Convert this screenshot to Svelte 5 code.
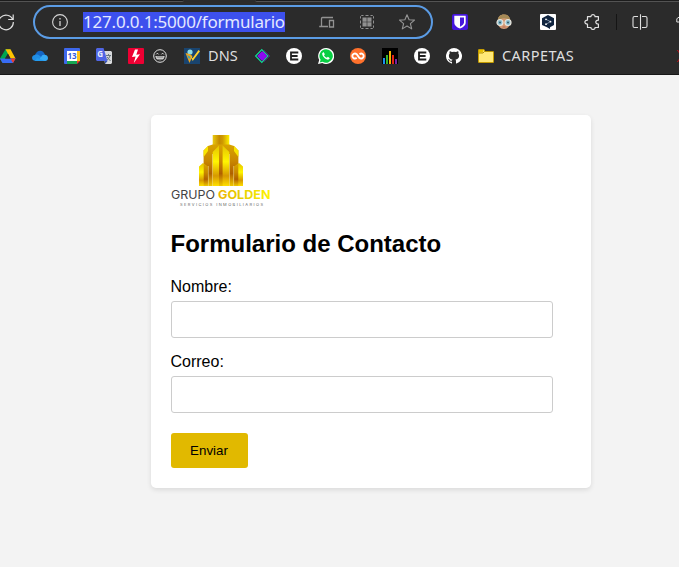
<script>
  const bars = [
    [1, 10, 5, '#1c90ee'], [4, 7, 8, '#35b52d'], [7, 3, 12, '#f4b400'], [10, 7, 8, '#e32416'], [13, 11, 4, '#7524a5']
  ];
  let nombre = $state('');
  let correo = $state('');
</script>

{#snippet eBadge()}
  <svg class="icon" viewBox="0 0 16 16"><circle cx="8" cy="8" r="8" fill="#fff"/><path d="M12.3 4.5H5v7h7.3M5 8h6.6" fill="none" stroke="#202020" stroke-width="1.8"/></svg>
{/snippet}

<div class="browser">
  <div class="edge"><span class="edge-left"></span><span class="edge-right"></span></div>
  <div class="toolbar">
    <svg class="reload" viewBox="0 0 18 18"><path d="M15.7 6.5A7.3 7.3 0 1 0 16.3 9M16.2 1.5v5h-5" fill="none" stroke="#dedede" stroke-width="1.2"/></svg>
    <div class="address">
      <svg class="info" viewBox="0 0 16 16"><circle cx="8" cy="8" r="7.4" fill="none" stroke="#d6d6d6" stroke-width="1.1"/><path d="M8 7v5M8 4v1.4" stroke="#c8c8c8" stroke-width="1.4"/></svg>
      <span class="url">127.0.0.1:5000/formulario</span>
      <div class="address-icons">
        <svg class="icon" viewBox="0 0 16 16"><path d="M9 12.5H.2M2.5 12V4.5q0-1 1-1H14M10.5 6.5h4v6.5h-4z" fill="none" stroke="#929292" stroke-width="1.3"/></svg>
        <svg class="icon" viewBox="0 0 16 16"><path d="M1.5 4.5v-2l1-1h2M6.5 1.5h3M11.5 1.5h2l1 1v2M14.5 6.5v3M14.5 11.5v2l-1 1h-2M9.5 14.5h-3M4.5 14.5h-2l-1-1v-2M1.5 9.5v-3" fill="none" stroke="#909090"/><path d="M3.5 3.5h4.2v4.2H3.5zM8.3 3.5h4.2v4.2H8.3zM3.5 8.3h4.2v4.2H3.5zM8.3 8.3h4.2v4.2H8.3z" fill="#909090"/></svg>
        <svg class="icon" viewBox="0 0 16 16"><path d="m8 .8 2.1 4.9 5.4.4-4.1 3.5 1.3 5.3L8 12l-4.7 2.9 1.3-5.3L.5 6.1l5.4-.4z" fill="none" stroke="#959595" stroke-width="1.1" stroke-linejoin="round"/></svg>
      </div>
    </div>
    <div class="extensions">
      <svg class="icon" viewBox="0 0 16 16"><rect width="16" height="16" rx="2" fill="#4516dc"/><path d="M2.3 1.8h11.4v6.4c0 3.2-2.3 4.9-5.7 6.3-3.4-1.4-5.7-3.1-5.7-6.3z" fill="#fff"/><path d="M8 3.5h4v4.8c0 2-1.7 3.2-4 4.5z" fill="#4516dc"/></svg>
      <svg class="icon" viewBox="0 0 16 16"><path d="M2 8C1.5 3 4 .6 8 .6s6.5 2.5 6 7.5c-.1 4-2 7-6 7s-6-3-6-7" fill="#d39a73"/><path d="M1.5 7C2 3 4 .6 8 .6S14 3 14.5 7C12 5 11 4.2 8 4.2S4 5 1.5 7" fill="#a58a56"/><circle cx="4" cy="8.5" r="3" fill="#8fc0cf" stroke="#e9e5dd" stroke-width="1.2"/><circle cx="12" cy="8.5" r="3" fill="#8fc0cf" stroke="#e9e5dd" stroke-width="1.2"/><circle cx="4" cy="8.5" r="1" fill="#345b68"/><circle cx="12" cy="8.5" r="1" fill="#345b68"/><path d="M6.5 13h3" stroke="#b76a58"/></svg>
      <svg class="icon" viewBox="0 0 16 16"><rect width="16" height="16" rx="1" fill="#fff"/><path d="m8 1 6 3.2v6.9l-4 2.1V15l-3-1.7-5-2.4V4.2z" fill="#10243f"/><path d="m6.2 5.4 4.2 2.2-4.2 2.6" fill="none" stroke="#8da0b5" stroke-width=".8"/><g fill="#fff"><circle cx="6" cy="5.3" r=".9"/><circle cx="10.5" cy="7.7" r=".9"/><circle cx="6" cy="10.2" r=".9"/></g></svg>
      <svg class="icon" viewBox="0 0 16 16"><path d="M3.5 2.6H7c-.2-2.6 4.2-2.6 4 0h3.4v3.6c-3.5-.2-3.5 4 0 3.8v3.5H11c.2 2.6-4.2 2.6-4 0H3.5v-3.4C0 10.2 0 6 3.5 6.2z" fill="none" stroke="#e1e1e1" stroke-width="1.2" stroke-linejoin="round"/></svg>
    </div>
    <span class="separator"></span>
    <svg class="icon split" viewBox="0 0 16 16"><path d="M6 2.5H2.5Q1 2.5 1 4v8q0 1.5 1.5 1.5H6M10 2.5h3.5Q15 2.5 15 4v8q0 1.5-1.5 1.5H10M8.5 .3v15.4" fill="none" stroke="#dfdfdf" stroke-width="1.1"/></svg>
    <svg class="clipped" viewBox="0 0 3 16"><path d="M3 3.5H2L.8 5v3H3" fill="none" stroke="#ddd"/></svg>
  </div>

  <div class="bookmarks">
    <svg class="icon" viewBox="0 0 16 16"><path d="M5.5 1.3h5L5 10.7 2.5 15 0 10.5z" fill="#00a650"/><path d="M5.5 1.3h5l5 9.2h-5z" fill="#ffc400"/><path d="M0 10.5h15.5L13 15H2.5z" fill="#386bf4"/><path d="M10.5 10.5h5L13 15z" fill="#f13a2b"/><path d="m8 5.8-3 4.8h5.6z" fill="#2b2b2b"/></svg>
    <svg class="icon" viewBox="0 0 16 16"><path d="M3 7C5 1.2 11.5 1.3 13 7l-3 5H3z" fill="#1466c5"/><path d="M3 7c2-1 4 0 5 1l6 4.5c-1 .7-1.6.5-2.4.5H3.5C-1 13-1 7 3 7" fill="#208ee5"/><path d="M6 13 10.5 7q5-1 5.5 3-.2 3-3 3z" fill="#36a9f4"/><path d="m5 10 8 3H3z" fill="#239bf0"/></svg>
    <svg class="icon calendar" viewBox="0 0 16 16"><path d="M0 1q0-1 1-1h14q1 0 1 1v11l-4 4H1q-1 0-1-1z" fill="#3e68ec"/><path d="M13 3h3v10h-3z" fill="#fbc016"/><path d="M3 13h10v3H3z" fill="#16a751"/><path d="M13 13h3l-3 3z" fill="#ee3a31"/><path d="M3 3h10v10H3z" fill="#fff"/><text x="8" y="11">13</text></svg>
    <svg class="icon translate" viewBox="0 0 16 16"><path d="M7 3h8l1 1v11l-1 1H9z" fill="#d9dadc"/><path d="M1 0h6.5l4 13H1l-1-1V1z" fill="#5066e5"/><path d="M9 13h2.5L9 16z" fill="#3452ae"/><text x="1.3" y="9">G</text><path d="M10 7.5h5M12.5 6v1.5M14 7.5c-.4 2-2 4-3 4.5M11 9l3.5 4" fill="none" stroke="#68777f"/></svg>
    <svg class="icon" viewBox="0 0 16 16"><rect width="16" height="16" rx="1" fill="#ee0033"/><path d="M7 1.5 4 9l3.6-.6L5.8 15 12 6.2l-3.7.6L10 1.5z" fill="#fff"/></svg>
    <svg class="emoji" viewBox="0 0 14 14"><g fill="none" stroke="#e4e4e4"><circle cx="7" cy="7" r="6.3"/><path d="m3.2 5.4 1.2-1.2 1.2 1.2M8.4 5.4l1.2-1.2 1.2 1.2"/></g><path d="M2.4 7h9.2c0 5.7-9.2 5.7-9.2 0" fill="#e4e4e4"/><path d="M3.5 8h7M4.4 10.3h5.2" stroke="#444" stroke-width=".8"/></svg>
    <div class="bookmark dns"><svg class="icon" viewBox="0 0 16 16"><rect width="16" height="16" fill="#19446f"/><circle cx="6" cy="4" r="2.6" fill="#8bdce8"/><path d="m1.5 5 4 1 3 2-3 7z" fill="#f1a51b"/><path d="m3 7 4 2-2 2" fill="#3aa3bb"/><path d="m6 7 2.5 3.2L14.5 2 16 3.2 8.7 13z" fill="#ffd02b"/></svg><span class="dns-text">DNS</span></div>
    <svg class="icon diamond" viewBox="0 0 16 16"><path d="m10 2 6 6-6 6-6-6z" fill="#8c0af0"/><path d="M7.8 1.6 14 8l-6.2 6.4L1.6 8z" fill="#8c0af0" stroke="#2b2b2b" stroke-width="2.5"/><path d="M7.8 1.6 14 8l-6.2 6.4L1.6 8z" fill="none" stroke="#11d895" stroke-width="1.2"/><path d="m8.7 3.3 4.7 4.7-4.7 4.7L4 8z" fill="#8c0af0"/></svg>
    {@render eBadge()}
    <svg class="icon" viewBox="0 0 16 16"><path d="M8 0a8 8 0 1 1-3.7 15L0 16l1.2-4A8 8 0 0 1 8 0" fill="#fff"/><path d="M8 1.3a6.7 6.7 0 1 1-3.4 12.4l-2.8.7.8-2.6A6.7 6.7 0 0 1 8 1.3" fill="#08cf43"/><path d="M5.5 4 4.2 5.2c-.4 3 3.8 6.8 6.3 6.4l1.4-1.4-2-1.4-1.1 1C7.5 9.3 6.4 8.2 6 7.2l.9-1z" fill="#fff"/></svg>
    <svg class="icon" viewBox="0 0 16 16"><circle cx="8" cy="8" r="8" fill="#ff712c"/><path d="M9.5 6.2C11.5 4.7 13.7 6 13.7 8s-2.4 3.5-4.4 1.8L6.7 6.2C4.7 4.7 2.3 6 2.3 8s2.4 3.5 4.4 1.8" fill="none" stroke="#fff" stroke-width="1.9"/></svg>
    <svg class="icon" viewBox="0 0 16 16"><path d="M0 0h16v16H0z" fill="#000"/>{#each bars as [x, y, h, color]}<rect {x} {y} width="2" height={h + 1} fill={color}/>{/each}</svg>
    {@render eBadge()}
    <svg class="icon" viewBox="0 0 16 16"><path d="M8 0a8 8 0 0 0-2.5 15.6c.4.1.5-.2.5-.4v-1.5c-2.2.5-2.7-.9-2.7-.9-.4-.9-.9-1.2-.9-1.2-.7-.5.1-.5.1-.5.8.1 1.2.8 1.2.8.7 1.2 1.9.9 2.3.7.1-.5.3-.9.5-1.1-1.8-.2-3.6-.9-3.6-4 0-.9.3-1.6.8-2.1-.1-.2-.4-1 .1-2.1 0 0 .7-.2 2.2.8a7.5 7.5 0 0 1 4 0c1.5-1 2.2-.8 2.2-.8.5 1.1.2 1.9.1 2.1.5.5.8 1.2.8 2.1 0 3.1-1.9 3.8-3.7 4 .3.3.6.8.6 1.5v2.2c0 .2.1.5.5.4A8 8 0 0 0 8 0" fill="#fff"/></svg>
    <div class="bookmark folder"><svg class="icon" viewBox="0 0 16 16"><path d="M.5 2q0-.5.5-.5h5l1 2h8q.5 0 .5.5v10q0 .5-.5.5H1q-.5 0-.5-.5z" fill="#ffe878" stroke="#c49b00"/><path d="M1 2h4.7L4.5 4.5H1z" fill="#e8c000"/><path d="M1 5h4l1.4-1.5H15" fill="none" stroke="#b69100"/></svg><span class="folder-text">CARPETAS</span></div>
    <svg class="red-edge" viewBox="0 0 2 16"><path d="M0 2h1l1 2v1zM2 11v1l-1 2H0z" fill="#d80b12"/></svg>
  </div>
</div>

<main>
  <form class="card" onsubmit={(e) => e.preventDefault()}>
    <svg class="logo" viewBox="0 0 100 74" role="img" aria-label="Grupo Golden">
      <defs>
        <linearGradient id="top" x2="1"><stop stop-color="#eacb10"/><stop offset=".4" stop-color="#c58a00"/><stop offset=".6" stop-color="#cf9a00"/><stop offset="1" stop-color="#fff000"/></linearGradient>
        <linearGradient id="side" x2="0" y2="1"><stop stop-color="#d9a400"/><stop offset=".4" stop-color="#c98700"/><stop offset=".7" stop-color="#b06000"/><stop offset="1" stop-color="#f0c800"/></linearGradient>
        <linearGradient id="bright" x2="0" y2="1"><stop stop-color="#e5c300"/><stop offset=".4" stop-color="#fff600"/><stop offset=".75" stop-color="#d79900"/><stop offset="1" stop-color="#ffdf00"/></linearGradient>
        <linearGradient id="gold" x2="1"><stop stop-color="#efb400"/><stop offset=".45" stop-color="#e5cf00"/><stop offset="1" stop-color="#fff400"/></linearGradient>
      </defs>
      <path d="M41.7 0h16.6v11.5H41.7z" fill="url(#top)"/>
      <path d="m37 11 4.7-1.5h16.6L63 11l4.4 4.5V51H32.6V15.5z" fill="url(#side)"/>
      <path d="M37 11v5l-4.4 6v-6.5zM63 11v5l4.4 6v-6.5z" fill="#f8e500"/>
      <path d="M41.7 17 48 10.5V51h-6.3zM51.6 10.5l6.7 6.5v34h-6.7z" fill="url(#bright)"/>
      <path d="M28 31.5 32 28l5 4v19h-9zM72 31.5 68 28l-5 4v19h9z" fill="url(#bright)"/>
      <path d="M32.7 28.5 37 32v19h-4.3zM67.3 28.5 63 32v19h4.3z" fill="url(#side)"/>
      <path d="M37.4 31v20M62.6 31v20M41.5 19v32M58.5 19v32" stroke="#f9e99c" stroke-width=".5"/>
      <text class="grupo" x="0" y="64" textLength="44" lengthAdjust="spacingAndGlyphs">GRUPO</text>
      <text class="golden" x="47" y="64" textLength="52.5" lengthAdjust="spacingAndGlyphs">GOLDEN</text>
      <text class="services" x="9" y="71" textLength="83">SERVICIOS INMOBILIARIOS</text>
    </svg>
    <h2>Formulario de Contacto</h2>
    <label for="nombre">Nombre:</label>
    <input id="nombre" type="text" bind:value={nombre}>
    <label for="correo">Correo:</label>
    <input id="correo" type="email" bind:value={correo}>
    <button type="submit">Enviar</button>
  </form>
</main>

<style>
  :global(body) { background: #f3f3f3; }
  .browser { height: 75px; box-sizing: border-box; background: #2b2b2b; border-bottom: 1px solid #171717; overflow: hidden; font-family: "Noto Sans", sans-serif; }
  svg { display: block; flex: none; }
  .icon { width: 16px; height: 16px; }
  .edge { height: 2px; display: flex; justify-content: space-between; }
  .edge span { box-sizing: border-box; height: 2px; background: #1c1c1c; border-bottom: 1px solid #535353; }
  .edge-left { width: 184px; border-radius: 0 0 3px 0; }
  .edge-right { width: 424px; border-radius: 0 0 0 3px; }
  .toolbar { height: 40px; display: flex; align-items: center; }
  .reload { width: 18px; height: 18px; margin-left: -3px; }
  .address { width: 400px; height: 34px; margin-left: 18px; padding: 0 16px 0 17px; box-sizing: border-box; border: 2px solid #5b9ce5; border-radius: 17px; display: flex; align-items: center; }
  .info { width: 16px; height: 16px; }
  .url { width: 202px; height: 20px; margin-left: 15px; background: #3d50ed; color: #e4e8ff; font-size: 17px; line-height: 20px; letter-spacing: -.2px; white-space: nowrap; }
  .address-icons { display: flex; gap: 24px; margin-left: auto; }
  .extensions { display: flex; gap: 28px; margin-left: 19px; }
  .separator { width: 1px; height: 16px; margin-left: 16px; background: #151515; }
  .split { margin-left: 15px; }
  .clipped { width: 3px; height: 16px; margin-left: 28px; }
  .bookmarks { height: 28px; display: flex; align-items: center; gap: 16px; color: #dfdfdf; font-size: 14.5px; }
  .emoji { width: 14px; height: 14px; margin-left: -7px; }
  .bookmark { height: 16px; display: flex; align-items: center; gap: 8px; line-height: 14px; white-space: nowrap; }
  .bookmark span { padding-bottom: 2px; }
  .dns { margin-left: 1px; width: 54px; }
  .folder { width: 96px; }
  .dns-text { letter-spacing: .1px; }
  .folder-text { letter-spacing: .45px; }
  .red-edge { width: 2px; height: 16px; margin-left: 87px; }
  .calendar text { font: bold 8px "Open Sans", sans-serif; fill: #315bdc; text-anchor: middle; }
  .translate text { font: bold 8px "Open Sans", sans-serif; fill: #e9edff; }
  main { display: flex; justify-content: center; height: 492px; box-sizing: border-box; padding: 40px 0 0 62px; font-family: "Liberation Sans", Arial, sans-serif; color: #000; }
  .card { width: 440px; height: 373px; box-sizing: border-box; padding: 20px; background: #fff; border-radius: 5px; box-shadow: 0 2px 5px rgb(0 0 0 / 10%); }
  .logo { width: 100px; height: 74px; overflow: visible; }
  .grupo { font: 12px Inter, sans-serif; fill: #444; }
  .golden { font: bold 12px Inter, sans-serif; fill: url(#gold); }
  .services { font: 4px Inter, sans-serif; fill: #666; }
  h2 { height: 27px; margin: 21px 0 20px; font-size: 24px; line-height: 27px; }
  label { display: block; height: 18px; padding-top: 1px; font-size: 16px; line-height: 18px; margin-bottom: 5px; }
  input { display: block; width: 382px; height: 37px; box-sizing: border-box; margin: 0 0 14px; padding: 10px; border: 1px solid #ccc; border-radius: 3px; background: #fff; outline: 0; }
  button { display: block; width: 77px; height: 35px; margin-top: 20px; padding: 0; border: 0; border-radius: 3px; background: #e1b900; color: #000; font: 13.333px "Liberation Sans", Arial, sans-serif; }
</style>
